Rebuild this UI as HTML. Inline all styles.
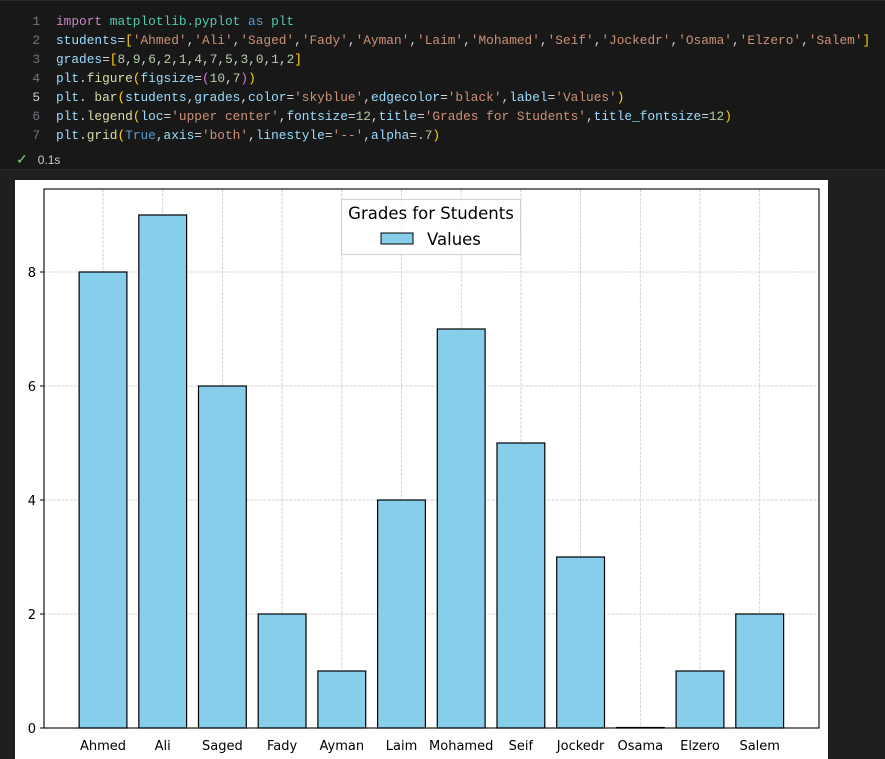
<!DOCTYPE html>
<html><head><meta charset="utf-8"><style>
body{margin:0;width:885px;height:759px;background:#1f1f1f;overflow:hidden;position:relative;font-family:"Liberation Sans",sans-serif}
.code{position:absolute;left:0;top:0;width:885px;height:170px;background:#181818;border-bottom:1px solid #2b2b2b;border-top:1px solid #2b2b2b;box-sizing:border-box}
.ln{position:absolute;left:0;width:40px;text-align:right;color:#6e7681;font:12.8px/19px "Liberation Mono",monospace}
.cl{position:absolute;left:56px;white-space:pre;color:#d4d4d4;font:12.8px/19px "Liberation Mono",monospace}
.k{color:#c586c0}.m{color:#4ec9b0}.v{color:#9cdcfe}.s{color:#ce9178}.n{color:#b5cea8}.f{color:#dcdcaa}.b{color:#ffd700}.p{color:#da70d6}.kw{color:#569cd6}
.st{position:absolute;left:16px;top:150px;color:#cccccc;font-size:12px}
.img{position:absolute;left:15px;top:180px;width:813px;height:579px;background:#fff}
</style></head><body>
<div class="code">
<div class="ln" style="top:11px">1</div><div class="cl" style="top:11px"><span class="k">import</span> <span class="m">matplotlib.pyplot</span> <span class="kw">as</span> <span class="m">plt</span></div>
<div class="ln" style="top:30px">2</div><div class="cl" style="top:30px"><span class="v">students</span>=<span class="b">[</span><span class="s">'Ahmed'</span>,<span class="s">'Ali'</span>,<span class="s">'Saged'</span>,<span class="s">'Fady'</span>,<span class="s">'Ayman'</span>,<span class="s">'Laim'</span>,<span class="s">'Mohamed'</span>,<span class="s">'Seif'</span>,<span class="s">'Jockedr'</span>,<span class="s">'Osama'</span>,<span class="s">'Elzero'</span>,<span class="s">'Salem'</span><span class="b">]</span></div>
<div class="ln" style="top:49px">3</div><div class="cl" style="top:49px"><span class="v">grades</span>=<span class="b">[</span><span class="n">8</span>,<span class="n">9</span>,<span class="n">6</span>,<span class="n">2</span>,<span class="n">1</span>,<span class="n">4</span>,<span class="n">7</span>,<span class="n">5</span>,<span class="n">3</span>,<span class="n">0</span>,<span class="n">1</span>,<span class="n">2</span><span class="b">]</span></div>
<div class="ln" style="top:68px">4</div><div class="cl" style="top:68px"><span class="v">plt</span>.<span class="f">figure</span><span class="b">(</span><span class="v">figsize</span>=<span class="p">(</span><span class="n">10</span>,<span class="n">7</span><span class="p">)</span><span class="b">)</span></div>
<div class="ln" style="top:87px;color:#ccc">5</div><div class="cl" style="top:87px"><span class="v">plt</span>. <span class="f">bar</span><span class="b">(</span><span class="v">students</span>,<span class="v">grades</span>,<span class="v">color</span>=<span class="s">'skyblue'</span>,<span class="v">edgecolor</span>=<span class="s">'black'</span>,<span class="v">label</span>=<span class="s">'Values'</span><span class="b">)</span></div>
<div class="ln" style="top:106px">6</div><div class="cl" style="top:106px"><span class="v">plt</span>.<span class="f">legend</span><span class="b">(</span><span class="v">loc</span>=<span class="s">'upper center'</span>,<span class="v">fontsize</span>=<span class="n">12</span>,<span class="v">title</span>=<span class="s">'Grades for Students'</span>,<span class="v">title_fontsize</span>=<span class="n">12</span><span class="b">)</span></div>
<div class="ln" style="top:125px">7</div><div class="cl" style="top:125px"><span class="v">plt</span>.<span class="f">grid</span><span class="b">(</span><span class="kw">True</span>,<span class="v">axis</span>=<span class="s">'both'</span>,<span class="v">linestyle</span>=<span class="s">'--'</span>,<span class="v">alpha</span>=<span class="n">.7</span><span class="b">)</span></div>
<div class="st"><span style="color:#89d185;font-size:14px">✓</span><span style="display:inline-block;width:10px"></span>0.1s</div>
</div>
<div class="img"></div>
<svg style="position:absolute;left:0;top:0" width="885" height="759" font-family="DejaVu Sans, Liberation Sans, sans-serif">
<g stroke="#b0b0b0" stroke-width="0.8" stroke-dasharray="3,1.3" opacity="0.7">
<line x1="44" x2="819" y1="614" y2="614"/><line x1="44" x2="819" y1="500" y2="500"/><line x1="44" x2="819" y1="386" y2="386"/><line x1="44" x2="819" y1="272" y2="272"/>
<line x1="103" x2="103" y1="189" y2="728"/><line x1="162.7" x2="162.7" y1="189" y2="728"/><line x1="222.4" x2="222.4" y1="189" y2="728"/><line x1="282.1" x2="282.1" y1="189" y2="728"/><line x1="341.8" x2="341.8" y1="189" y2="728"/><line x1="401.5" x2="401.5" y1="189" y2="728"/><line x1="461.2" x2="461.2" y1="189" y2="728"/><line x1="520.9" x2="520.9" y1="189" y2="728"/><line x1="580.6" x2="580.6" y1="189" y2="728"/><line x1="640.3" x2="640.3" y1="189" y2="728"/><line x1="700" x2="700" y1="189" y2="728"/><line x1="759.7" x2="759.7" y1="189" y2="728"/>
</g>
<g fill="#87ceeb" stroke="#000" stroke-width="1.2">
<rect x="79.1" y="272" width="47.8" height="456"/>
<rect x="138.8" y="215" width="47.8" height="513"/>
<rect x="198.5" y="386" width="47.8" height="342"/>
<rect x="258.2" y="614" width="47.8" height="114"/>
<rect x="317.9" y="671" width="47.8" height="57"/>
<rect x="377.6" y="500" width="47.8" height="228"/>
<rect x="437.3" y="329" width="47.8" height="399"/>
<rect x="497" y="443" width="47.8" height="285"/>
<rect x="556.7" y="557" width="47.8" height="171"/>
<rect x="616.4" y="727.5" width="47.8" height="0.5"/>
<rect x="676.1" y="671" width="47.8" height="57"/>
<rect x="735.8" y="614" width="47.8" height="114"/>
</g>
<rect x="44" y="189" width="775" height="539" fill="none" stroke="#000" stroke-width="1.1"/>
<g stroke="#000" stroke-width="1">
<line x1="40" x2="44" y1="728" y2="728"/><line x1="40" x2="44" y1="614" y2="614"/><line x1="40" x2="44" y1="500" y2="500"/><line x1="40" x2="44" y1="386" y2="386"/><line x1="40" x2="44" y1="272" y2="272"/>
</g>
<g font-size="13" fill="#000" text-anchor="end">
<text x="36" y="733">0</text><text x="36" y="619">2</text><text x="36" y="505">4</text><text x="36" y="391">6</text><text x="36" y="277">8</text>
</g>
<g font-size="13" fill="#000" text-anchor="middle">
<text x="103" y="750">Ahmed</text><text x="162.7" y="750">Ali</text><text x="222.4" y="750">Saged</text><text x="282.1" y="750">Fady</text><text x="341.8" y="750">Ayman</text><text x="401.5" y="750">Laim</text><text x="461.2" y="750">Mohamed</text><text x="520.9" y="750">Seif</text><text x="580.6" y="750">Jockedr</text><text x="640.3" y="750">Osama</text><text x="700" y="750">Elzero</text><text x="759.7" y="750">Salem</text>
</g>
<rect x="341.5" y="199.5" width="179" height="55" rx="2" fill="#fff" fill-opacity="0.8" stroke="#d0d0d0"/>
<text x="431" y="219" font-size="16.5" text-anchor="middle" fill="#000">Grades for Students</text>
<rect x="381" y="233" width="32" height="11" fill="#87ceeb" stroke="#000" stroke-width="1"/>
<text x="427" y="245" font-size="16.5" fill="#000">Values</text>
</svg>
</body></html>
